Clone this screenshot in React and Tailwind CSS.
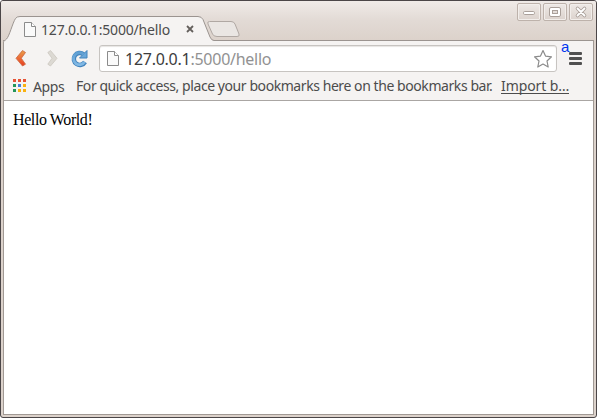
import React from "react";

const FONT = "font-['Noto_Sans','Open_Sans',sans-serif]";

function PageIcon() {
  return (
    <svg width="12" height="15" viewBox="0 0 12 15" className="shrink-0">
      <path d="M.5 .5H7.5L11.5 4.5V14.5H.5Z" fill="#fafafa" stroke="#8b8b8b" />
      <path d="M7.5 .5V4.5H11.5" fill="#fff" stroke="#8b8b8b" />
    </svg>
  );
}

function TabStrip() {
  return (
    <div className="absolute left-[2px] top-[15px] h-[26px] w-[240px]">
      <svg width="240" height="26" viewBox="0 0 240 26" className="absolute left-0 top-0">
        <path d="M0 26C0 24.5 2 25 3.5 23C6.5 20 9.5 7 12.5 2.500Q13.7 .5 17 .5H195Q198.500 .5 200 3.500L207 21Q208.500 24.500 211 24.500V26Z" fill="#f5f3f2" />
        <path d="M.5 26C.5 24.500 2 25 3.500 23C6.500 20 9.500 7 12.500 2.500Q13.700 .5 17 .5H195Q198.500 .5 200 3.500L207 21Q208.500 24.500 211 24.500" fill="none" stroke="#9b9490" />
        <path d="M206.500 5.500H228Q231 5.500 232 8L236 18Q237 20.500 234 20.500H214Q210.500 20.500 209.500 18L205 8Q204 5.500 206.500 5.500Z" fill="#eae6e3" stroke="#b0a8a3" />
        <path d="M184 10L190 16M190 10L184 16" stroke="#64605d" strokeWidth="1.8" />
      </svg>
      <div className="relative flex items-center pl-[21px] pt-[6px]">
        <PageIcon />
        <span className="ml-[5px] text-[14px] leading-[15px] tracking-[-0.18px] text-[#4c4c4c]">127.0.0.1:5000/hello</span>
      </div>
    </div>
  );
}

function WindowButton({ children }) {
  return (
    <div className="h-[18px] w-[24px] rounded-[2px] border border-[#bdb2ab] bg-gradient-to-b from-[#eee9e6] to-[#dcd3cd] shadow-[inset_0_0_0_1px_#f2eeeb]">
      <svg width="22" height="16" viewBox="0 0 22 16">{children}</svg>
    </div>
  );
}

function TitleBar() {
  return (
    <div className="relative flex h-[39px] shrink-0 justify-end gap-[2px] bg-gradient-to-b from-[#f0ebe8] via-[#e2dad5] to-[#dcd2cb] pr-[3px] pt-[2px]">
      <WindowButton>
        <rect x="5.500" y="7.500" width="11" height="3" rx="1.200" fill="#fff" stroke="#aaa09a" />
      </WindowButton>
      <WindowButton>
        <rect x="5.500" y="3.500" width="11" height="9" rx="1.500" fill="#fff" stroke="#aaa09a" />
        <rect x="8.500" y="6.500" width="5" height="3" fill="#e5deda" stroke="#aaa09a" />
      </WindowButton>
      <WindowButton>
        <path d="M7.500 4.500L14.500 11.500M14.500 4.500L7.500 11.500" stroke="#aaa09a" strokeWidth="3.600" strokeLinecap="round" />
        <path d="M7.500 4.500L14.500 11.500M14.500 4.500L7.500 11.500" stroke="#fff" strokeWidth="1.800" strokeLinecap="round" />
      </WindowButton>
    </div>
  );
}

function Toolbar() {
  return (
    <div className="flex h-[34px] shrink-0 items-start border-t border-[#9b9490] pt-[4px]">
      <svg width="95" height="28" viewBox="0 0 95 28" className="shrink-0">
        <defs>
          <linearGradient id="back" x1="0" y1="0" x2="0" y2="1">
            <stop offset="0" stopColor="#e9a04a" />
            <stop offset=".5" stopColor="#ec6c37" />
            <stop offset="1" stopColor="#e63e20" />
          </linearGradient>
          <linearGradient id="reload" x1="0" y1="0" x2="0" y2="1">
            <stop offset="0" stopColor="#5f9fd3" />
            <stop offset="1" stopColor="#82b9e5" />
          </linearGradient>
        </defs>
        <path d="M18.500 5.500L21.500 7.500L17.300 13.300L21.500 19.200L18.500 21L12 13.300Z" fill="url(#back)" stroke="#ca6741" strokeWidth=".8" strokeLinejoin="round" />
        <path d="M46.500 5.500L43.800 7.500L48 13.300L43.800 19.200L46.500 21L53 13.300Z" fill="#dcd9d3" stroke="#cbc7bf" strokeWidth=".8" strokeLinejoin="round" />
        <path d="M79.500 9.200A6 6 0 1 0 81 17" fill="none" stroke="#4484bd" strokeWidth="4.500" />
        <path d="M83 5.500V13H75.500Z" fill="#69a7da" stroke="#4484bd" strokeLinejoin="round" />
        <path d="M79.500 9.200A6 6 0 1 0 80.500 17" fill="none" stroke="url(#reload)" strokeWidth="2.800" />
      </svg>
      <div className="flex h-[27px] w-[458px] shrink-0 items-center rounded-[3px] border border-[#c7c4c1] bg-white pl-[7px] pr-[3px] shadow-[inset_0_1px_1px_#e7e5e3]">
        <PageIcon />
        <span className="ml-[6px] text-[16px] leading-[20px] tracking-[-0.26px] text-[#3d3d3d]">
          127.0.0.1<span className="text-[#929292]">:5000/hello</span>
        </span>
        <svg width="20" height="20" viewBox="0 0 20 20" className="ml-auto">
          <path d="M10 1.500L12.500 7.100L18.500 7.800L14 12L15.200 18L10 15L4.800 18L6 12L1.500 7.800L7.500 7.100Z" fill="#fff" stroke="#8b8b8b" strokeWidth="1.200" strokeLinejoin="round" />
        </svg>
      </div>
      <div className="relative ml-[12px] mt-[7px] flex flex-col gap-[2px]">
        <span className="absolute -left-[8px] -top-[14px] font-['Liberation_Sans',sans-serif] text-[15px] leading-[18px] text-[#0037ee]">a</span>
        <i className="h-[3px] w-[13px] rounded-[1px] bg-[#505050]" />
        <i className="h-[3px] w-[13px] rounded-[1px] bg-[#505050]" />
        <i className="h-[3px] w-[13px] rounded-[1px] bg-[#505050]" />
      </div>
    </div>
  );
}

function Bookmarks() {
  return (
    <div className="flex h-[27px] shrink-0 items-start whitespace-nowrap border-b border-[#aaa6a3] pl-[9px] text-[14px] leading-[20px] text-[#4c4c4c]">
      <div className="mt-[5px] grid shrink-0 grid-cols-[3px_3px_3px] gap-[2px]">
        <i className="size-[3px] bg-[#e75335]" /><i className="size-[3px] bg-[#e75335]" /><i className="size-[3px] bg-[#e75335]" />
        <i className="size-[3px] bg-[#24965a]" /><i className="size-[3px] bg-[#4580d8]" /><i className="size-[3px] bg-[#f9b211]" />
        <i className="size-[3px] bg-[#24965a]" /><i className="size-[3px] bg-[#f9b211]" /><i className="size-[3px] bg-[#f9b211]" />
      </div>
      <span className="ml-[7px] mt-[3px] w-[43px] shrink-0 tracking-[-0.4px]">Apps</span>
      <span className="mt-[2px] w-[425px] shrink-0 tracking-[-0.43px]">For quick access, place your bookmarks here on the bookmarks bar.</span>
      <span className="mt-[2px] h-[18px] w-[68px] shrink-0 border-b border-[#4c4c4c] tracking-[-0.08px]">Import b…</span>
    </div>
  );
}

export default function App() {
  return (
    <div className={`relative h-[418px] w-[597px] overflow-hidden rounded-[3px] border border-[#4b4648] bg-[#dcd2cb] ${FONT}`}>
      <div className="flex h-[416px] flex-col">
        <TitleBar />
        <div className="mx-[2px] mb-[2px] flex min-h-0 flex-1 flex-col border-x border-b border-[#a19994] bg-[#f5f3f2]">
          <Toolbar />
          <Bookmarks />
          <main className="flex-1 bg-white pl-[9px] pt-[9px] font-['Liberation_Serif',serif] text-[16px] leading-[20px] tracking-[-0.4px] text-black">Hello World!</main>
        </div>
      </div>
      <TabStrip />
    </div>
  );
}
